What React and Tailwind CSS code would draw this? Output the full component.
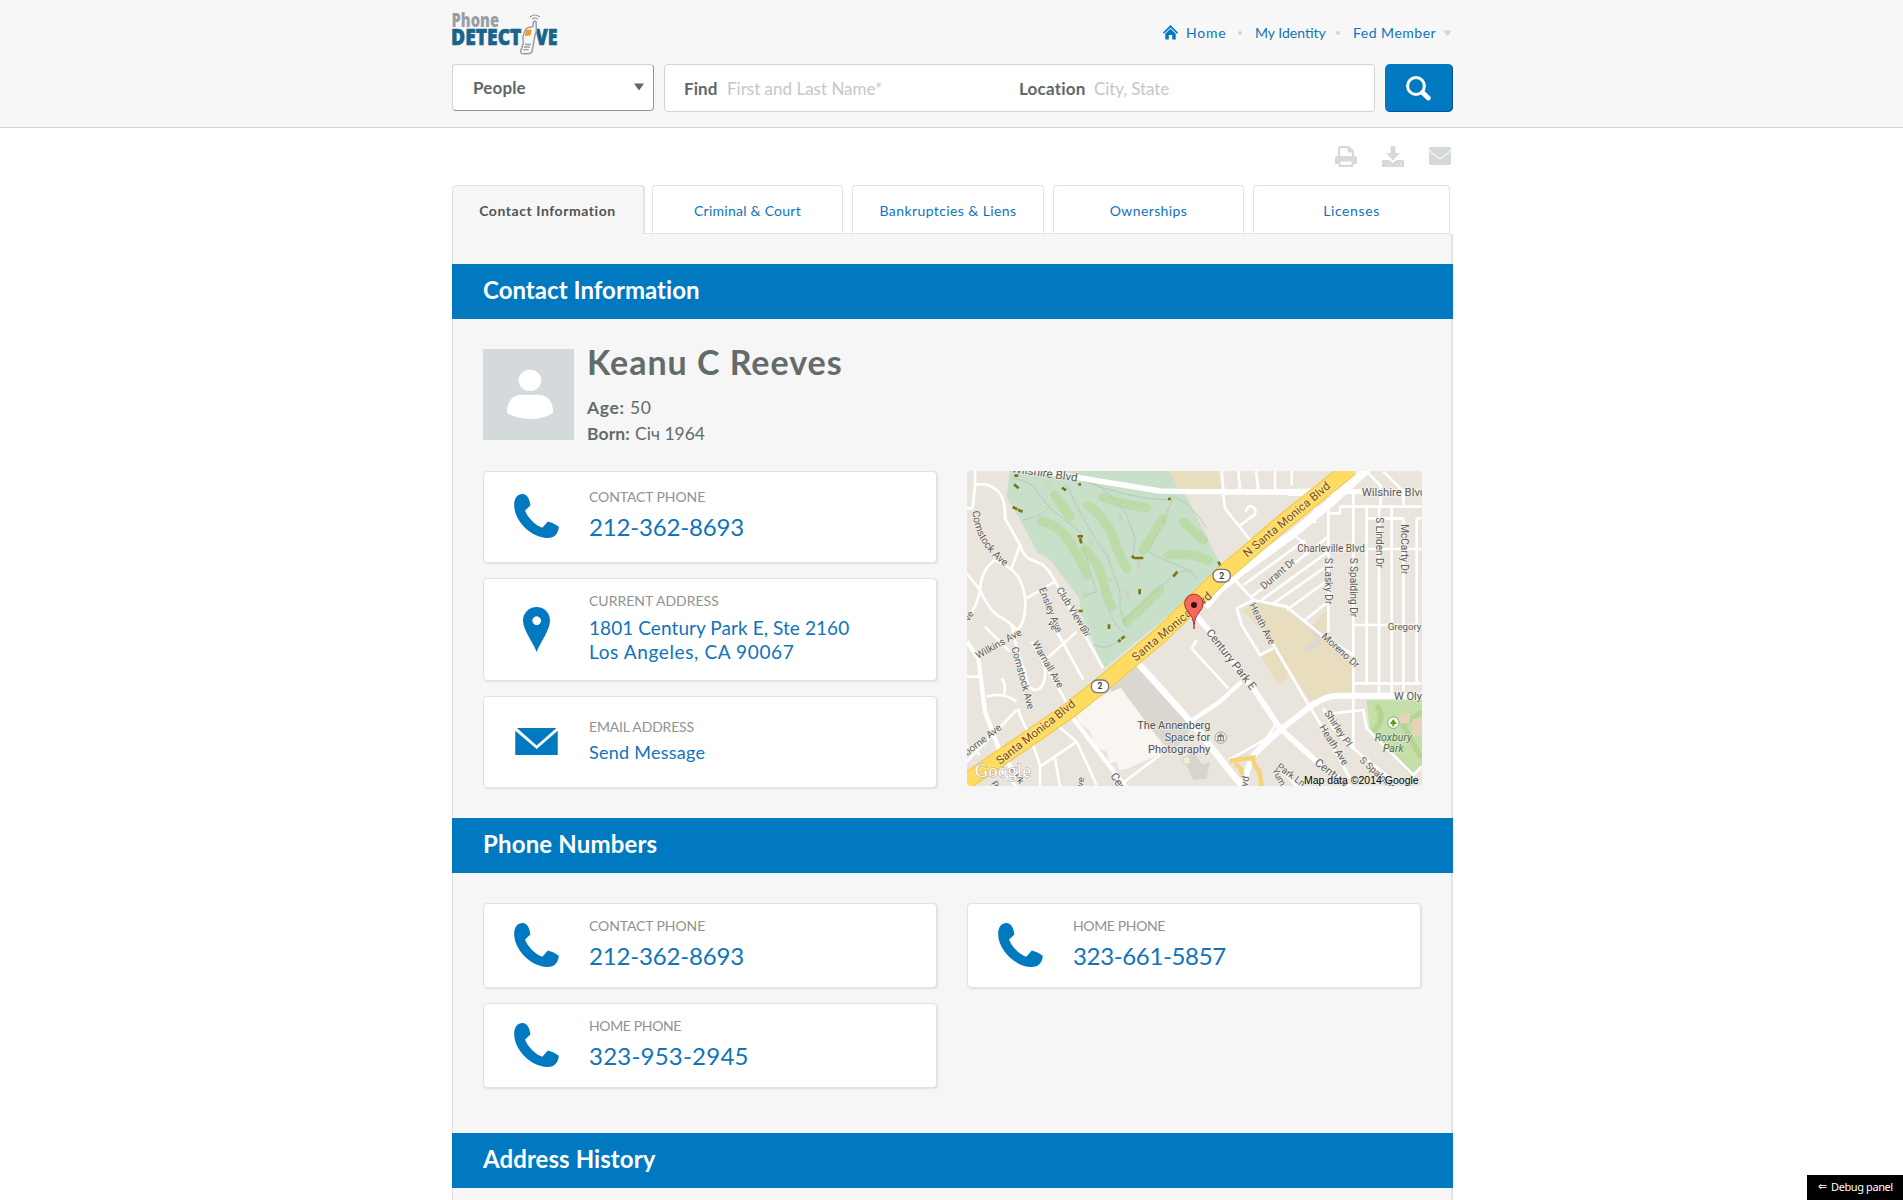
import React from "react";

const PhoneIcon = () => (
  <svg className="mb-[2px] h-[44px] w-[45px]" viewBox="132 101 135 133" fill="#0079c1">
    <path d="M157 101C172 101 179 118 181 136L165 151C172 172 195 195 217 203L234 184Q252 188 267 200C265 220 256 234 232 234C180 232 132 180 132 134C132 112 143 101 157 101Z" />
  </svg>
);

const PinIcon = () => (
  <svg className="h-[45px] w-[27px]" viewBox="159 440 81 135" fill="#0079c1">
    <path fillRule="evenodd" d="M200 440C223 440 240 458 240 480C240 510 214 540 200 575C186 540 159 510 159 480C159 458 177 440 200 440ZM200 468a13 13 0 1 0 0.1 0Z" />
  </svg>
);

const MailIcon = () => (
  <svg className="mb-[2px] h-[27px] w-[43px]" viewBox="135 803 129 82" fill="#0079c1">
    <path d="M140 803H260L200 856Z" />
    <path d="M135 811L200 867L264 811V885H135Z" />
  </svg>
);

const Logo = () => (
  <svg className="block h-[50px] w-[112px] overflow-visible" viewBox="448 8 112 50">
    <g fontFamily="'Open Sans', sans-serif" fontWeight="800">
      <text x="451.5" y="26.5" fontSize="18.5" fill="#979fa4" textLength="47.5" lengthAdjust="spacingAndGlyphs">Phone</text>
      <text x="451" y="45" fontSize="22" fill="#17658d" stroke="#17658d" strokeWidth="0.6" textLength="70.5" lengthAdjust="spacingAndGlyphs">DETECT</text>
      <text x="535.5" y="45" fontSize="22" fill="#17658d" stroke="#17658d" strokeWidth="0.6" textLength="22" lengthAdjust="spacingAndGlyphs">VE</text>
    </g>
    <path d="M525.5 29.5Q527 27.5 531 27L533 26.5L533.5 22Q534.5 20.5 536 21.5L536.3 28Q537 31 535 35L532 52Q530 54.5 522 53.5Q520 53 521 50L523.5 43Q521.5 38 525.5 29.5Z" fill="#f7f7f7" stroke="#979fa4" strokeWidth="1.5" />
    <path d="M526 30L531.5 29.5L530.5 35.5L524.8 36Z" fill="#fb9820" />
    <path d="M525 44.5h6M524 47h6M523.3 49.7h5.5" stroke="#979fa4" strokeWidth="1.3" />
    <path d="M530 17Q535 13 540 17M532 19.2Q535 16.5 538 19.2" fill="none" stroke="#979fa4" strokeWidth="1.2" />
  </svg>
);

const tabs = [
  { label: "Criminal & Court", w: "mr-[9px] w-[191px]", t: "tracking-[0.25px]" },
  { label: "Bankruptcies & Liens", w: "mr-[9px] w-[192px]", t: "tracking-[0.4px]" },
  { label: "Ownerships", w: "mr-[9px] w-[191px]", t: "tracking-[0.4px]" },
  { label: "Licenses", w: "w-[197px]", t: "tracking-[0.6px]" },
];

const Band = ({ children, className = "" }) => (
  <h2 className={"-ml-px -mr-[2px] h-[55px] bg-[#0079c1] pl-[31px] text-[24px] leading-[51px] font-bold text-white " + className}>{children}</h2>
);

const Card = ({ icon, className, children }) => (
  <div className={"flex w-[454px] rounded-[4px] border border-[#e0e1e1] bg-white shadow-[1px_1px_2px_rgba(0,0,0,0.09)] " + className}>
    <div className="flex w-[105px] shrink-0 items-center justify-center">{icon}</div>
    <div>{children}</div>
  </div>
);

const Label = ({ children, className }) => (
  <div className={"h-[20px] text-[14px] leading-[20px] text-[#929292] " + className}>{children}</div>
);

const streets = [
  "M45 18V60Q80 50 110 75Q137 95 135 160L180 240Q190 270 205 280L250 300Q270 320 285 350L430 610",
  "M180 240L155 310M45 60L38 130L20 130M100 288Q62 320 60 375Q85 430 110 450Q150 470 175 500M100 285Q150 300 178 340Q200 390 195 430Q195 470 170 500",
  "M20 325L60 375Q50 430 20 460M200 400L285 350M20 635H60M75 485L150 560M155 480Q170 560 195 620Q205 690 240 670Q265 640 250 590L350 500M80 695Q130 680 170 710M125 640Q140 660 132 688",
  "M280 480L370 645M215 530L330 730M20 890L170 735M175 730Q180 760 205 800L240 900V965M290 780L350 830L410 960M350 830L240 905M150 845L200 800M20 840L60 870M90 880L170 965M285 880L300 965",
  "M785 18L790 75M790 90L795 130L870 225M835 185L885 148Q890 120 865 125L855 140M790 85H1075M835 18L840 75M888 18L895 75M945 18V75M995 18V60",
  "M1220 20L1262 62V125M1270 20L1330 80V125M1065 120V170L1035 175M1140 125H1384M1105 145H1140V125M1030 252H1384M1180 480H1384M1180 655H1384M1215 160H1330",
  "M1105 100V500M1180 85V850M1220 125V655M1257 125V685M1295 125V685M1330 160V685M1370 160H1384M1370 160V655",
  "M1000 210L1040 240M850 360L1035 225M875 395L1105 215M905 405L1105 260M940 415L1105 300M980 435L1105 345M1035 465L1105 410M825 345L880 405L980 425L1060 490L1090 515L1180 570",
  "M880 405L830 430L845 480L900 570L940 550M935 530L1040 710L1080 775L1170 940M1090 730L1120 790L1180 850L1290 940M1120 745L1210 735L1220 790L1360 930L1384 905",
  "M710 525L695 550L805 670M805 885Q870 850 920 820L950 775M480 960L600 870M1010 965L970 920",
];

const fairways = [
  "M245 170Q300 180 335 240T380 330", "M385 122Q440 160 460 220T500 310", "M285 90L330 155", "M430 97Q490 120 560 128",
  "M610 160L550 255", "M672 172L730 225", "M375 255Q420 300 430 350T455 425", "M500 470L600 375", "M625 270Q680 260 745 285",
];

const roadLabels = [
  [154, 22, 8, 35, "Wilshire Blvd"], [1205, 92, 0, 34, "Wilshire Blvd"], [236, 372, 68, 30, "Ensley Ave"], [288, 374, 58, 30, "Club View Dr"],
  [54, 582, -29, 30, "Wilkins Ave"], [154, 548, 75, 30, "Comstock Ave"], [216, 535, 60, 30, "Warnall Ave"], [22, 873, -38, 30, "borne Ave"],
  [28, 470, -60, 28, "ve"], [262, 475, 55, 28, "ve"], [358, 488, 60, 28, "Dr"], [1012, 262, 0, 30, "Charleville Blvd"], [912, 374, -40, 30, "Durant Dr"],
  [867, 420, 63, 30, "Heath Ave"], [1095, 278, 90, 30, "S Lasky Dr"], [1170, 278, 90, 30, "S Spalding Dr"], [1247, 157, 90, 30, "S Linden Dr"],
  [1322, 178, 90, 30, "McCarty Dr"], [1283, 494, 0, 29, "Gregory Way"], [737, 503, 52, 34, "Century Park E"], [1083, 517, 42, 30, "Moreno Dr"],
  [1302, 704, 0, 33, "W Olympic"], [1092, 745, 56, 30, "Shirley Pl"], [1077, 787, 58, 30, "Heath Ave"], [1197, 888, 42, 29, "S Spalding Dr"],
  [1062, 897, 38, 34, "Century"], [948, 909, 36, 29, "Park Ln"], [450, 932, 58, 34, "Century"], [862, 966, -80, 30, "vd"], [368, 966, -80, 28, "ve"],
  [935, 915, 62, 28, "Yum"], [148, 915, 55, 28, "e Pk"], [92, 955, 60, 28, "P"],
];

const MapPicture = () => (
  <svg className="h-[315px] w-[455px] rounded-[4px]" viewBox="21 18 1365 945" fontFamily="Roboto, sans-serif">
    <rect x="21" y="18" width="1365" height="945" fill="#e9e5dc" />
    <path d="M150 18H640L690 115L782 300L700 390L430 612L385 495L362 440L358 400L270 285L235 265L140 95Z" fill="#c8dfca" />
    <path d="M628 18H775L782 72H655Z" fill="#e8ddbf" />
    <path d="M845 435L890 410L980 435L1050 490L1100 435V525L1180 580V685L1130 690L1050 708L935 530L880 470Z" fill="#e8ddbf" />
    <path d="M905 575L940 550L988 635L955 660Z" fill="#e8ddbf" />
    <path d="M1035 545L1065 525L1055 500L1075 490L1085 530L1045 565Z" fill="#dcd9d2" />
    <path d="M1220 705H1386V905L1350 930L1230 800Z" fill="#c5dfa9" />
    <path d="M1250 720Q1280 760 1240 800M1384 740L1330 780L1384 880" fill="none" stroke="#b3d493" strokeWidth="16" />
    <path d="M1320 745h30v30h-30zM1358 762h28v50h-28z" fill="#e8d3b8" />
    <path d="M445 668L530 590L700 780L640 860Z" fill="#dbd7d0" />
    <path d="M350 750L385 725L400 705L482 668L615 850L605 865L500 912L478 915L470 890L448 895L440 860L405 845L390 800L355 770Z" fill="#f9f5f0" />
    <path d="M690 850L730 900L750 890L740 940L700 945L680 900Z" fill="#d8d4cc" />
    <g fill="none" stroke="#bddba9" strokeWidth="28" strokeLinecap="round">
      {fairways.map((d) => <path key={d} d={d} />)}
    </g>
    <g fill="none" stroke="#b5c6b5" strokeWidth="2.5">
      <path d="M160 40Q220 50 235 85L270 130L360 200Q390 330 410 380L370 395M320 60Q380 190 440 270L480 380V430L500 490M380 50Q440 60 500 150L525 220L520 270M190 165Q260 150 270 120M350 40Q500 100 620 105L640 90M640 100Q600 190 565 260Q620 290 700 320M490 470L640 330Q690 300 710 340M640 95Q690 110 740 190M445 430Q460 480 490 500M400 540Q450 560 480 520" />
    </g>
    <g fill="none" stroke="#d3d2b4" strokeWidth="8" strokeLinecap="round">
      <path d="M262 58l6 3M480 150l4 14M390 230l4 12M375 330l4 10M445 270l2 4M535 290l4 20M450 340l2 6M600 165l4 30M370 380l6 6M500 380l4 18" />
    </g>
    <g stroke="#7d7514" strokeWidth="8">
      <path d="M163 32h12M162 58l14 12M158 126l14 7M174 134l14 6M306 68l12 8M355 58h8M353 214h16M360 220l4 15M624 102h9M516 272l6 8M522 279h28M640 335l12-15M539 372v16M354 438h14M447 478v14M474 530l8-5M484 522l10-8M775 290l6 12" />
    </g>
    <g fill="none" stroke="#fff" strokeWidth="8" strokeLinejoin="round">
      {streets.map((d) => <path key={d} d={d} />)}
    </g>
    <g fill="none" stroke="#fff" strokeLinejoin="round">
      <path d="M200 10L380 42L600 78L690 80H1386" strokeWidth="16" />
      <path d="M985 82H1130" strokeWidth="22" />
      <path d="M735 425L775 375L842 320L1002 204L1117 108L1222 12" strokeWidth="26" />
      <path d="M690 430L750 500L880 670L960 790L1070 890L1180 975" strokeWidth="17" />
      <path d="M1386 692H1130Q1090 695 1050 725L960 795L885 865Q860 900 855 965" strokeWidth="18" />
      <path d="M530 590L690 768L850 968" strokeWidth="20" />
      <path d="M320 735L450 905L500 968" strokeWidth="13" />
      <path d="M690 770L780 710L845 650" strokeWidth="13" />
      <path d="M21 530L55 580L75 740L120 860L175 940" strokeWidth="13" />
    </g>
    <path d="M808 888Q850 882 880 878Q878 900 898 918L905 965M822 898Q850 905 845 935" fill="none" stroke="#f8d27b" strokeWidth="14" />
    <path d="M10 955L200 825L330 735L430 655L600 512L690 425L785 330L975 167L1170 10" fill="none" stroke="#efc23e" strokeWidth="50" />
    <path d="M10 955L200 825L330 735L430 655L600 512L690 425L785 330L975 167L1170 10" fill="none" stroke="#fedc61" strokeWidth="45" />
    <g fill="#5b5b5b" stroke="#f4f1ea" strokeWidth="4" paintOrder="stroke">
      {roadLabels.map(([x, y, r, s, t], i) => (
        <text key={i} transform={`translate(${x} ${y}) rotate(${r})`} fontSize={s}>{t}</text>
      ))}
      <path id="comstock" d="M38 138Q42 240 145 312" fill="none" stroke="none" />
      <text fontSize="31"><textPath href="#comstock">Comstock Ave</textPath></text>
    </g>
    <g fill="#7b4c1b" stroke="#ffe993" strokeWidth="5" paintOrder="stroke" fontSize="35">
      <text transform="translate(120 900) rotate(-38)" textLength="290">Santa Monica Blvd</text>
      <text transform="translate(528 590) rotate(-40)" textLength="300">Santa Monica Blvd</text>
      <text transform="translate(862 278) rotate(-40)" textLength="328">N Santa Monica Blvd</text>
    </g>
    {[[420, 664], [785, 332]].map(([x, y]) => (
      <g key={x}>
        <rect x={x - 26} y={y - 19} width="52" height="38" rx="18" fill="#fff" stroke="#777" strokeWidth="4" />
        <text x={x} y={y + 9} fontSize="26" fontWeight="700" textAnchor="middle" fill="#444">2</text>
      </g>
    ))}
    <g fill="#505050" stroke="#f4f1ea" strokeWidth="4" paintOrder="stroke" fontSize="33" textAnchor="end">
      <text x="751" y="793" textLength="219">The Annenberg</text>
      <text x="751" y="828" textLength="137">Space for</text>
      <text x="751" y="863" textLength="187">Photography</text>
    </g>
    <circle cx="782" cy="818" r="17" fill="#f5f1ea" stroke="#a9a29a" strokeWidth="3" />
    <path d="M772 814l10-7 10 7zM774 816v9M782 816v9M790 816v9M771 827h22" fill="#8a7b6e" stroke="#8a7b6e" strokeWidth="3" />
    <circle cx="680" cy="887" r="12" fill="#f3ead9" stroke="#d8cdbb" strokeWidth="3" />
    <circle cx="1300" cy="773" r="17" fill="#fff" stroke="#8aa583" strokeWidth="3" />
    <path d="M1300 762L1311 777H1303V784H1297V777H1289Z" fill="#5da012" />
    <g fill="#557058" stroke="#dbebc9" strokeWidth="4" paintOrder="stroke" fontSize="32" fontStyle="italic" textAnchor="middle">
      <text x="1300" y="827">Roxbury</text>
      <text x="1300" y="862">Park</text>
    </g>
    <path d="M702 478Q699 455 685 441Q673 428 674 415A27 27 0 0 1 729 415Q730 428 718 441Q705 455 702 478Z" fill="#f4695e" stroke="#b02c25" strokeWidth="3" />
    <path d="M702 472v20" stroke="#d02a20" strokeWidth="4" />
    <circle cx="702" cy="420" r="9" fill="#3f0b09" />
    <text x="44" y="935" fontFamily="'Liberation Serif', serif" fontSize="56" textLength="168" fill="#fff" stroke="#a9a7a2" strokeWidth="3" paintOrder="stroke">Google</text>
    <text x="1032" y="958" fontFamily="'Liberation Sans', sans-serif" fontSize="32" textLength="344" lengthAdjust="spacingAndGlyphs" fill="#000" stroke="#eeeae2" strokeWidth="3" paintOrder="stroke">Map data ©2014 Google</text>
  </svg>
);

export default function App() {
  return (
    <div className="h-[1200px] overflow-hidden bg-white font-['Lato','Noto_Sans',sans-serif]">
      <header className="h-[128px] border-b border-[#d3d5d5] bg-[#f7f7f7]">
        <div className="mx-auto w-[1003px] pl-[2px]">
          <div className="flex h-[64px] items-start justify-between pt-2">
            <div className="-ml-1"><Logo /></div>
            <nav className="mt-[15px] flex h-[20px] items-center text-[14px] leading-[20px] text-[#0f74bb]">
              <svg className="mr-[8px] mb-[2px] h-[15px] w-[15px]" viewBox="0 0 15 15">
                <path d="M0.5 8.2L7.5 1.3L14.5 8.2" fill="none" stroke="#0079c1" strokeWidth="1.7" />
                <path d="M2.3 8.8L7.5 3.8L12.7 8.8V14.5H9.2V10H5.8V14.5H2.3Z" fill="#0079c1" />
              </svg>
              <span className="w-[52px] tracking-[0.8px]">Home</span>
              <span className="mr-[13px] h-[4px] w-[4px] rounded-full bg-[#d3d6d8]" />
              <span className="w-[81px]">My Identity</span>
              <span className="mr-[13px] h-[4px] w-[4px] rounded-full bg-[#d3d6d8]" />
              <span className="w-[90px] tracking-[0.5px]">Fed Member</span>
              <svg className="mr-px h-[6px] w-[9px]" viewBox="0 0 9 6"><path d="M0 0.5H9L4.5 6Z" fill="#d3d6d8" /></svg>
            </nav>
          </div>
          <div className="flex text-[17px]">
            <div className="flex h-[47px] w-[202px] items-center justify-between rounded-[4px] border border-t-[#d3d5d5] border-r-[#8f9494] border-b-[#8f9494] border-l-[#d3d5d5] bg-white pr-[9px] pl-[20px]">
              <span className="font-bold tracking-[0.15px] text-[#5f6868]">People</span>
              <svg className="mb-px h-[8px] w-[10px]" viewBox="0 0 10 8"><path d="M0 0.5H10L5 7.5Z" fill="#5f6868" /></svg>
            </div>
            <div className="ml-[10px] flex h-[48px] w-[711px] items-center rounded-[4px] border border-[#d3d5d5] bg-white pt-[2px] pl-[19px] text-[#c5c7c7]">
              <span className="w-[43px] font-bold tracking-[0.1px] text-[#5f6868]">Find</span>
              <span className="w-[292px]">First and Last Name*</span>
              <span className="w-[75px] font-bold tracking-[0.2px] text-[#5f6868]">Location</span>
              <span className="tracking-[-0.1px]">City, State</span>
            </div>
            <div className="ml-[10px] flex h-[48px] w-[68px] items-center justify-center rounded-[5px] bg-[#0079c1] shadow-[inset_-1px_-1px_0_#0055a4]">
              <svg className="mr-[2px] h-[25px] w-[25px]" viewBox="0 0 25 25" fill="none" stroke="#fff">
                <circle cx="10" cy="10" r="8.4" strokeWidth="3" />
                <path d="M16.5 16.5L22.3 22" strokeWidth="4.8" strokeLinecap="round" />
              </svg>
            </div>
          </div>
        </div>
      </header>

      <main className="mx-auto w-[1003px] pl-[2px]">
        <div className="flex h-[57px] items-start justify-end gap-[25px] pt-[17.5px] pr-[2px] text-[#d5d9dc]">
          <svg className="h-[21px] w-[22px]" viewBox="0 0 22 21" fill="currentColor">
            <path fillRule="evenodd" d="M5 0H14L19 5V10H20Q22 10 22 12V18H18.5V21H3.5V18H0V12Q0 10 3 10V2Q3 0 5 0ZM5.2 2.2V10H16.8V6.5H12.8V2.2ZM5.5 15.5V18.8H16.5V15.5Z" />
          </svg>
          <svg className="h-[21px] w-[22px]" viewBox="0 0 22 21" fill="currentColor">
            <path d="M8.5 0H13.5V7H18L11 14.5L4 7H8.5Z" />
            <path d="M0 14H7.5L11 17.3L14.5 14H22V21H0Z" />
            <path d="M14.5 18h1.5M18 18h1.5" stroke="#fff" strokeWidth="1.3" opacity="0.6" />
          </svg>
          <svg className="mt-[1.5px] h-[18px] w-[22px]" viewBox="0 0 22 18" fill="currentColor">
            <path d="M1.5 0H20.5Q22 0 22 2.2Q20 5.5 11 11Q2 5.5 0 2.2Q0 0 1.5 0Z" />
            <path d="M0 3.8Q4 8 11 12.3Q18 8 22 3.8V16.5Q22 18 20.5 18H1.5Q0 18 0 16.5Z" />
          </svg>
        </div>

        <div className="flex h-[49px] text-center text-[14px] leading-[49px]">
          <div className="h-[49px] w-[193px] rounded-t-[4px] border border-r-2 border-b-0 border-[#e1e2e2] bg-[#f6f6f6] pr-px font-bold tracking-[0.56px] text-[#4f5454]">Contact Information</div>
          <div className="flex w-[806px] border-b border-[#e1e2e2] pl-[7px]">
            {tabs.map((t) => (
              <div key={t.label} className={"h-[48px] rounded-t-[4px] border border-b-0 border-[#e1e2e2] bg-white text-[#0f74bb] " + t.w + " " + t.t}>{t.label}</div>
            ))}
          </div>
        </div>

        <div className="h-[980px] w-[1001px] border-r-2 border-l border-[#e1e2e2] bg-[#f6f6f6] pt-[30px]">
          <Band className="tracking-[0.03px]">Contact Information</Band>
          <div className="flex pt-[30px] pl-[30px]">
            <div className="h-[91px] w-[91px] bg-[#d4d9dc]">
              <svg className="h-[91px] w-[91px]" viewBox="129 537 273 273" fill="#fff">
                <ellipse cx="270" cy="631" rx="34" ry="32" />
                <path d="M201 729V718Q206 674 248 674H292Q334 674 339 718V729Q310 747 270 747T201 729Z" />
              </svg>
            </div>
            <div className="ml-[13px] text-[#636b6b]">
              <h1 className="-mt-[7px] text-[34px] leading-[40px] font-bold tracking-[0.98px]">Keanu C Reeves</h1>
              <p className="mt-[13px] flex text-[17.5px] leading-[26px]"><b className="w-[43px] tracking-[0.6px]">Age:</b><span className="tracking-[0.7px]">50</span></p>
              <p className="flex text-[17.5px] leading-[26px]"><b className="w-[48px] tracking-[0.1px]">Born:</b><span>Січ 1964</span></p>
            </div>
          </div>
          <div className="mt-[24px] flex gap-[30px] pl-[30px]">
            <div className="flex flex-col gap-[15px]">
              <Card className="h-[92px]" icon={<PhoneIcon />}>
                <Label className="mt-[15px] tracking-[-0.1px]">CONTACT PHONE</Label>
                <div className="mt-[5px] text-[24px] leading-[30px] tracking-[-0.17px] text-[#0f74bb]">212-362-8693</div>
              </Card>
              <Card className="h-[103px]" icon={<PinIcon />}>
                <Label className="mt-[12px]">CURRENT ADDRESS</Label>
                <div className="mt-[5px] text-[19px] leading-[24px] tracking-[0.07px] text-[#0f74bb]">1801 Century Park E, Ste 2160</div>
                <div className="text-[19px] leading-[24px] tracking-[0.62px] text-[#0f74bb]">Los Angeles, CA 90067</div>
              </Card>
              <Card className="h-[92px]" icon={<MailIcon />}>
                <Label className="mt-[20px] tracking-[-0.17px]">EMAIL ADDRESS</Label>
                <div className="mt-[4px] text-[18px] leading-[23px] tracking-[0.25px] text-[#0f74bb]">Send Message</div>
              </Card>
            </div>
            <MapPicture />
          </div>

          <Band className="mt-[30px] tracking-[0.17px]">Phone Numbers</Band>
          <div className="grid grid-cols-[454px_454px] gap-x-[30px] gap-y-[15px] pt-[30px] pl-[30px]">
            <Card className="h-[85px]" icon={<PhoneIcon />}>
              <Label className="mt-[12px] tracking-[-0.1px]">CONTACT PHONE</Label>
              <div className="mt-[5px] text-[24px] leading-[30px] tracking-[-0.17px] text-[#0f74bb]">212-362-8693</div>
            </Card>
            <Card className="h-[85px]" icon={<PhoneIcon />}>
              <Label className="mt-[12px] tracking-[-0.36px]">HOME PHONE</Label>
              <div className="mt-[5px] text-[24px] leading-[30px] tracking-[-0.35px] text-[#0f74bb]">323-661-5857</div>
            </Card>
            <Card className="h-[85px]" icon={<PhoneIcon />}>
              <Label className="mt-[12px] tracking-[-0.36px]">HOME PHONE</Label>
              <div className="mt-[5px] text-[24px] leading-[30px] tracking-[0.22px] text-[#0f74bb]">323-953-2945</div>
            </Card>
          </div>
          <Band className="mt-[45px] tracking-[0.08px]">Address History</Band>
        </div>
      </main>

      <div className="fixed right-0 bottom-0 flex h-[25px] w-[96px] items-center bg-black pl-[11px] text-[11px] text-white">
        <span className="w-[13px] font-['DejaVu_Sans',sans-serif] text-[11px]">⇐</span>
        <span className="font-['Noto_Sans',sans-serif] tracking-[-0.4px]">Debug panel</span>
      </div>
    </div>
  );
}
